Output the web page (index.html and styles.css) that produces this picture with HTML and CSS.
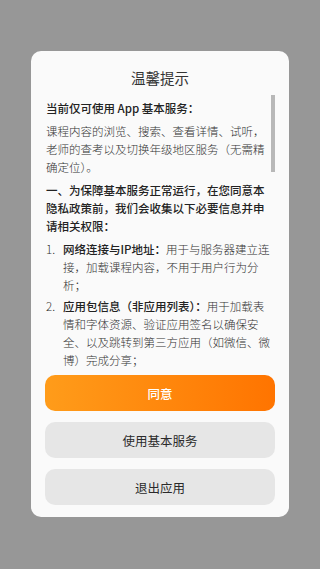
FILE: index.html
```html
<!DOCTYPE html>
<html lang="zh-CN">
<head>
    <meta charset="UTF-8">
    <meta name="viewport" content="width=device-width, initial-scale=1.0">
    <title>温馨提示</title>
    <link rel="stylesheet" href="styles.css">
</head>
<body>
    <div class="overlay">
        <div class="dialog">
            <h2 class="title">温馨提示</h2>
            <div class="scroll-wrap">
                <div class="content">
                    <p class="strong">当前仅可使用 App 基本服务：</p>
                    <p>课程内容的浏览、搜索、查看详情、试听，老师的查考以及切换年级地区服务（无需精确定位）。</p>
                    <p class="strong">一、为保障基本服务正常运行，在您同意本隐私政策前，我们会收集以下必要信息并申请相关权限：</p>
                    <ol class="list">
                        <li><span class="num">1.</span><div><b>网络连接与IP地址：</b>用于与服务器建立连接，加载课程内容，不用于用户行为分析；</div></li>
                        <li><span class="num">2.</span><div><b>应用包信息（非应用列表）：</b>用于加载表情和字体资源、验证应用签名以确保安全、以及跳转到第三方应用（如微信、微博）完成分享；</div></li>
                    </ol>
                </div>
                <div class="scroll-thumb"></div>
            </div>
            <div class="actions">
                <button class="btn primary">同意</button>
                <button class="btn">使用基本服务</button>
                <button class="btn">退出应用</button>
            </div>
        </div>
    </div>
</body>
</html>
```

FILE: styles.css
```css
* {
    box-sizing: border-box;
}
html, body {
    margin: 0;
    height: 100%;
}
body {
    font-family: "Noto Sans CJK SC", "Noto Sans", sans-serif;
    background: #979797;
}
.overlay {
    height: 569px;
    padding-top: 51px;
    display: flex;
    justify-content: center;
    align-items: flex-start;
}
.dialog {
    width: 258px;
    height: 466px;
    background: #fafafa;
    border-radius: 10px;
    display: flex;
    flex-direction: column;
}
.title {
    margin: 0;
    height: 44px;
    padding-top: 17px;
    text-align: center;
    font-size: 14.5px;
    line-height: 20px;
    font-weight: 400;
    color: #333;
}
.scroll-wrap {
    position: relative;
    height: 273px;
    overflow: hidden;
}
.content {
    width: 226px;
    margin-left: 15px;
    padding-top: 4px;
    font-size: 11.5px;
    line-height: 18px;
    font-weight: 300;
    color: #333;
}
.content p {
    margin: 0 0 5px;
}
.content .strong {
    color: #222;
    font-weight: 500;
}
.list {
    list-style: none;
    margin: 0;
    padding: 0;
}
.list li {
    display: flex;
    margin-bottom: 3px;
}
.list .num {
    width: 17px;
    flex: none;
}
.list b {
    font-weight: 500;
    color: #222;
}
.scroll-thumb {
    position: absolute;
    left: 240px;
    top: 0;
    width: 4px;
    height: 77px;
    background: #b8b8b8;
}
.actions {
    padding: 7px 14px 0;
    display: flex;
    flex-direction: column;
    gap: 11px;
}
.btn {
    height: 36px;
    border: none;
    border-radius: 10px;
    background: #e6e6e6;
    color: #2a2a2a;
    font-family: inherit;
    font-size: 12.5px;
}
.btn.primary {
    background: linear-gradient(90deg, #ff9c1a, #ff7400);
    color: #fff;
    font-weight: 500;
}
```
